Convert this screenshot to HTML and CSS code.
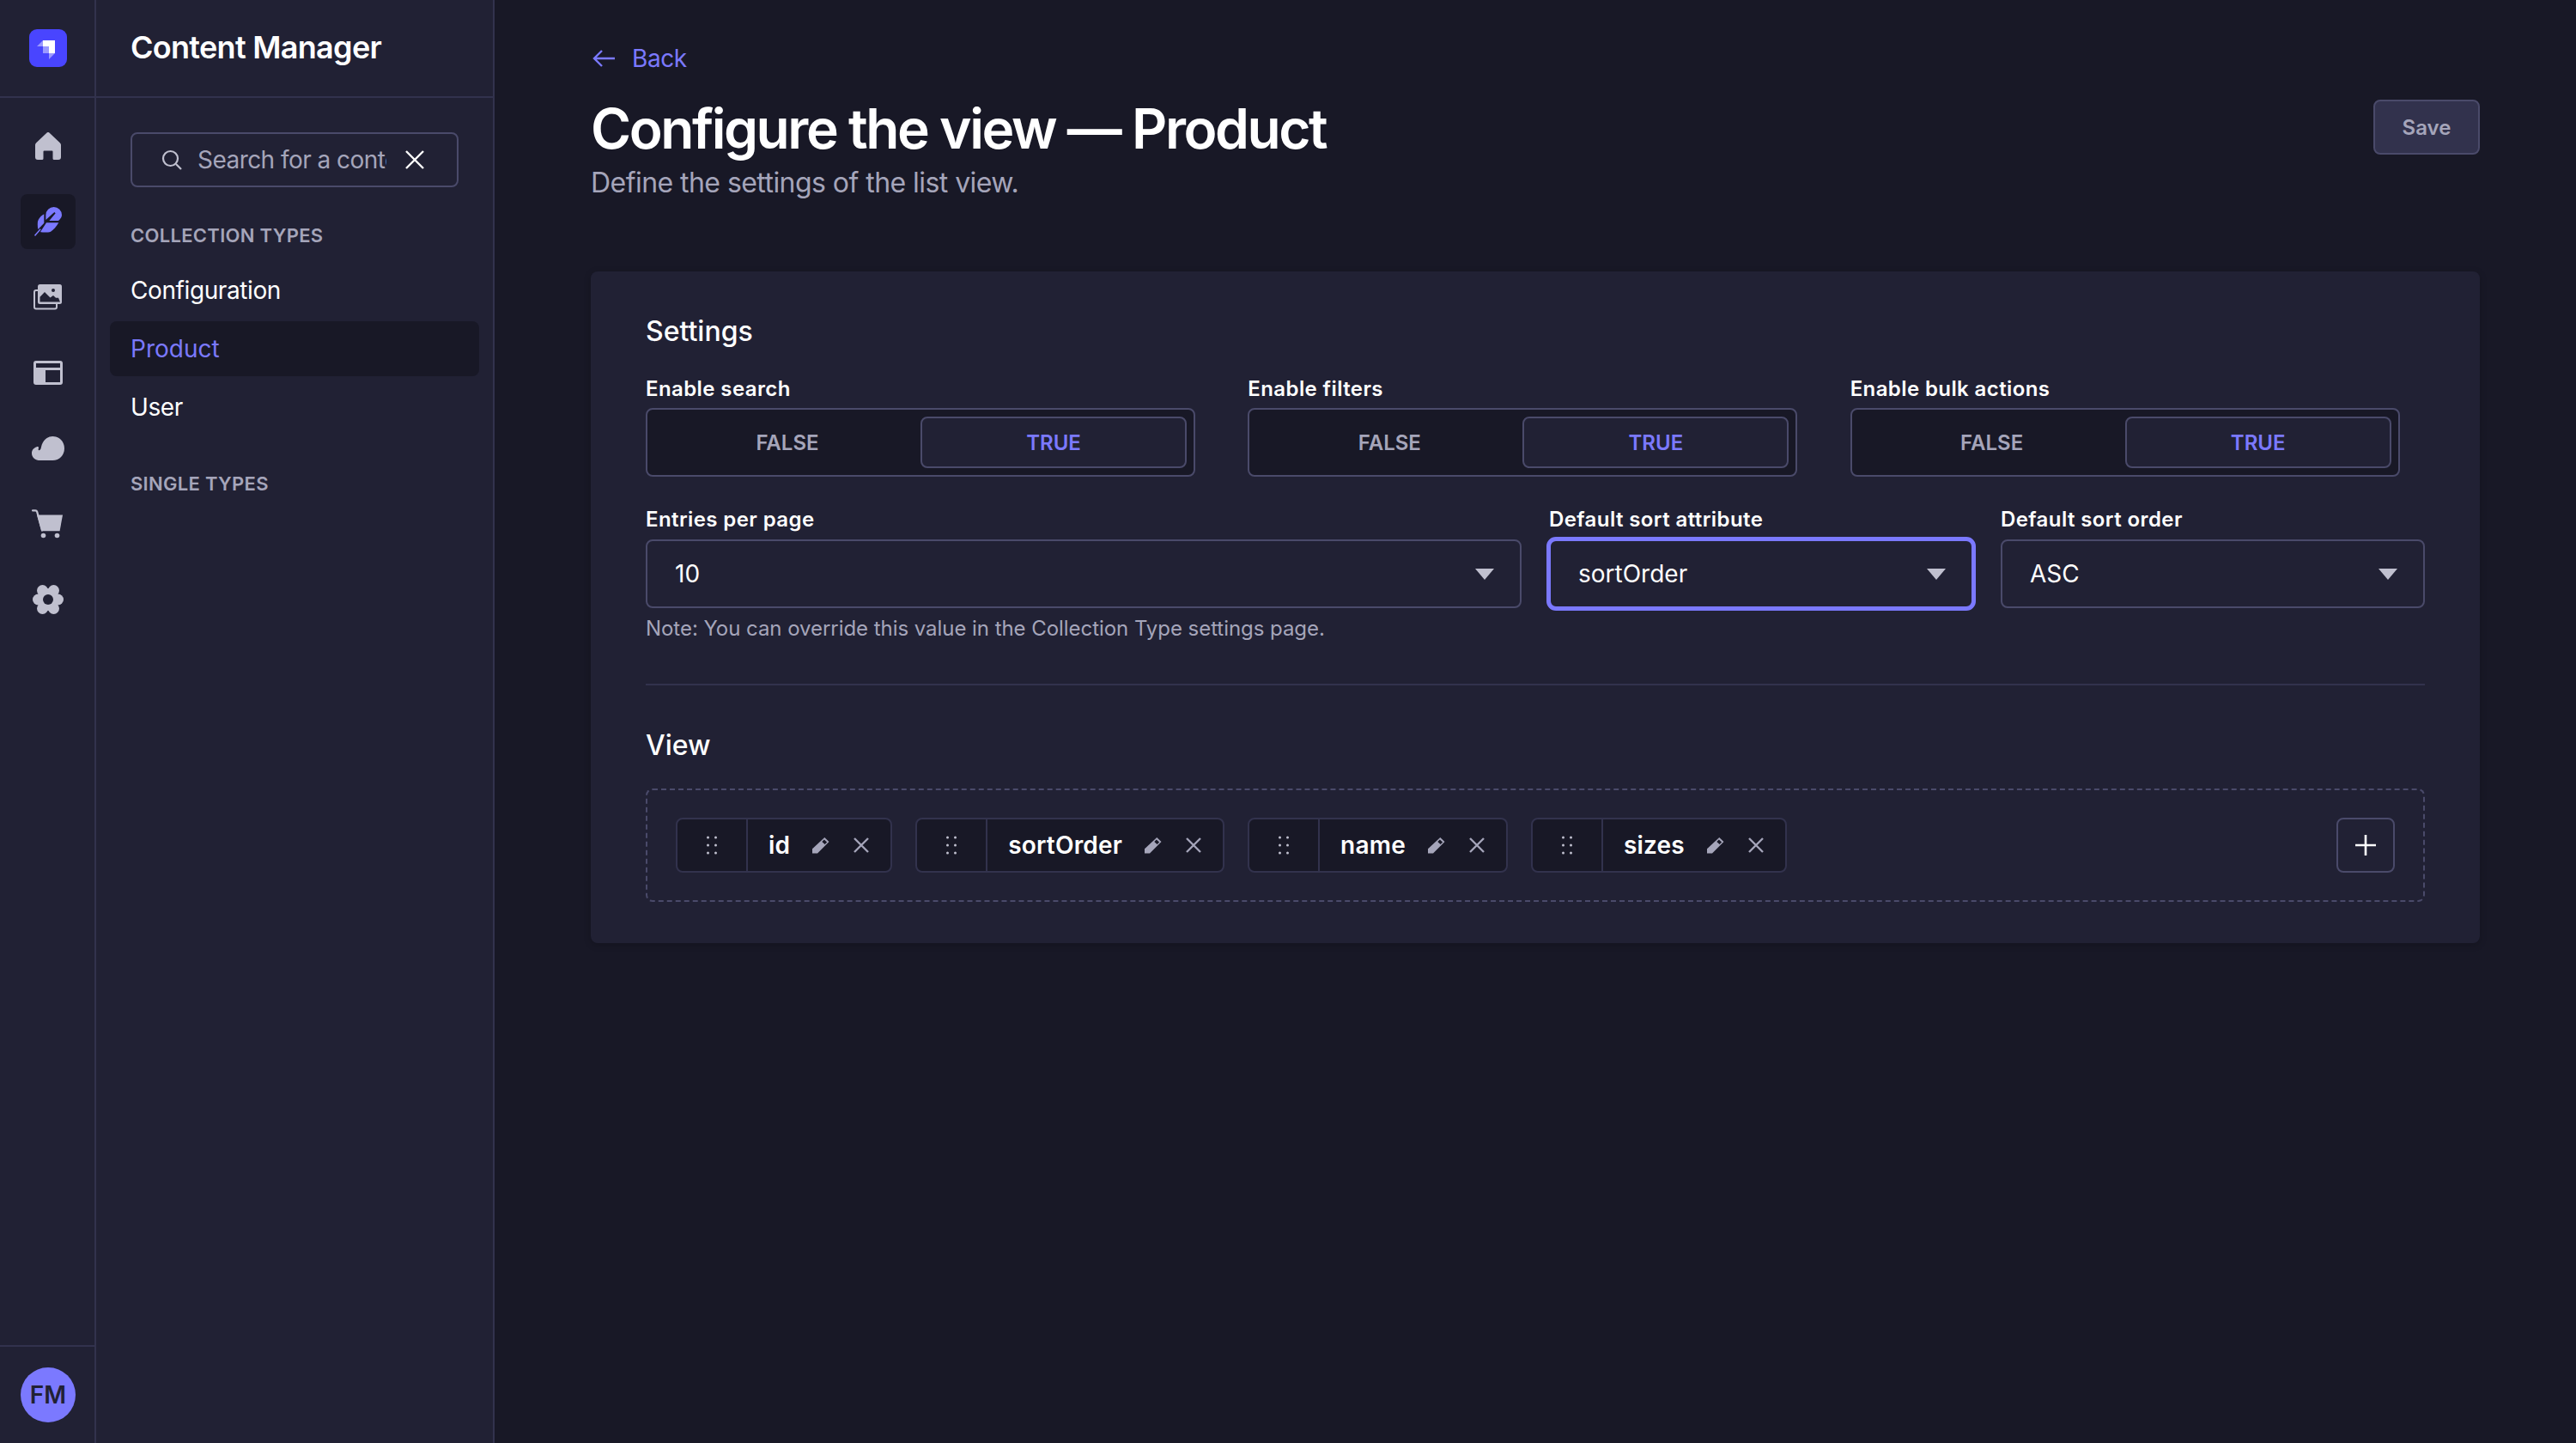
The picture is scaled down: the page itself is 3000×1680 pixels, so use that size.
FILE: index.html
```html
<!DOCTYPE html>
<html lang="en">
<head>
  <meta charset="UTF-8">
  <title>Configure the view - Product</title>
  <link rel="stylesheet" href="styles.css">
</head>
<body>
  <!-- Iconos de las filas de la vista -->
  <svg class="icon-defs">
    <symbol id="dots" viewBox="0 0 12 22">
      <circle cx="1.500" cy="2" r="1.500"/><circle cx="10.500" cy="2" r="1.500"/>
      <circle cx="1.500" cy="11" r="1.500"/><circle cx="10.500" cy="11" r="1.500"/>
      <circle cx="1.500" cy="20" r="1.500"/><circle cx="10.500" cy="20" r="1.500"/>
    </symbol>
    <symbol id="pencil" viewBox="0 0 20 19">
      <path d="M0 13.300L14.300 0 19.500 5 6 18.500H0z" fill="#a5a5ba"/>
      <path d="M11.300 5l2.500-2.500 3.300 3-2.500 2.500z" fill="#181826"/>
    </symbol>
    <symbol id="cross" viewBox="0 0 18 18">
      <path d="M1 1l16 16M17 1L1 17" fill="none" stroke="#a5a5ba" stroke-width="2.400"/>
    </symbol>
  </svg>

  <nav class="rail">
    <div class="rail-head">
      <svg class="logo" viewBox="0 0 44 44">
        <rect width="44" height="44" rx="9" fill="#4945ff"/>
        <path d="M16 13h14v15h-7v-8h-7z" fill="#fff"/>
        <path d="M9 20l7-7v7z" fill="#fff" opacity=".45"/>
        <path d="M16 20h7v8h-7z" fill="#fff" opacity=".45"/>
        <path d="M23 28h7l-7 7z" fill="#fff" opacity=".45"/>
      </svg>
    </div>
    <div class="rail-links">
      <a class="rail-link">
        <svg width="30" height="32" viewBox="0 0 30 32"><path d="M13.600.6a2 2 0 0 1 2.800 0l12.400 11.600a3.600 3.600 0 0 1 1.200 2.700V29a3 3 0 0 1-3 3h-5a1.500 1.500 0 0 1-1.500-1.500V22.500a1 1 0 0 0-1-1h-9a1 1 0 0 0-1 1v8A1.500 1.500 0 0 1 8 32H3a3 3 0 0 1-3-3V14.900a3.600 3.600 0 0 1 1.200-2.700z" fill="#c0c0cf"/></svg>
      </a>
      <a class="rail-link active">
        <svg width="34" height="36" viewBox="120 328 102 106" fill="#7b79ff">
          <path d="M163 375V358a27 27 0 0 1 56 0c0 7-5 15-12 20h-32l22-26-4-4z"/>
          <path d="M135 380c3-10 12-20 22-25v31l-21 22c-2-9-2-19-1-28z"/>
          <path d="M165 385h43c-7 12-18 25-28 31-8 3-22 3-34 2l-2-1z"/>
          <path d="M123 428l20-22 3 3-20 23z"/>
        </svg>
      </a>
      <a class="rail-link">
        <svg width="34" height="30" viewBox="0 0 34 30" fill="none">
          <rect x="1" y="7" width="26" height="21.500" rx="2" stroke="#c0c0cf" stroke-width="2"/>
          <rect x="5" y="0" width="28" height="23" rx="2.500" fill="#c0c0cf"/>
          <path d="M7.500 20.500v-5.800l5.500-5.700 6.500 6.500 3.500-2.500 3 2.800 3 0 2 4.700z" fill="#212134"/>
          <circle cx="23" cy="7" r="2" fill="#212134"/>
        </svg>
      </a>
      <a class="rail-link">
        <svg width="34" height="28" viewBox="0 0 34 28">
          <path d="M3 0h28a3 3 0 0 1 3 3v22a3 3 0 0 1-3 3H3a3 3 0 0 1-3-3V3a3 3 0 0 1 3-3z" fill="#c0c0cf"/>
          <path d="M3 3h28v5H3zM14 11h17v14H14z" fill="#212134"/>
        </svg>
      </a>
      <a class="rail-link">
        <svg width="38" height="28" viewBox="0 0 38 28"><path d="M10 28C4 28 0 24.500 0 19.700c0-3.600 2.200-6.300 5.800-7.500 1.200-.4 2.200 0 2.200 1 0 .6-.4 1.200-.4 2 0 1.200 1.400 1.500 2.300.4.600-.8.800-2 1.100-3.100C12.500 5 17.700 0 24.300 0 32 0 38 6 38 14c0 8-5.800 14-13.700 14z" fill="#c0c0cf"/></svg>
      </a>
      <a class="rail-link">
        <svg width="38" height="34" viewBox="0 0 38 34" fill="#c0c0cf">
          <path d="M1 1.300h3.200c1 0 1.700.6 2 1.600L12 24.500" fill="none" stroke="#c0c0cf" stroke-width="2.200" stroke-linecap="round"/>
          <path d="M6 6.500h30l-3.400 18.800H11.300z"/>
          <circle cx="13.500" cy="30.500" r="2.800"/>
          <circle cx="29.500" cy="30.500" r="2.800"/>
        </svg>
      </a>
      <a class="rail-link">
        <svg width="36" height="34" viewBox="0 0 36 34" fill="#c0c0cf">
          <circle cx="18" cy="17" r="13"/>
          <circle cx="11.500" cy="6.500" r="6.500"/>
          <circle cx="24.500" cy="6.500" r="6.500"/>
          <circle cx="6.500" cy="17" r="6.500"/>
          <circle cx="29.500" cy="17" r="6.500"/>
          <circle cx="11.500" cy="27.500" r="6.500"/>
          <circle cx="24.500" cy="27.500" r="6.500"/>
          <circle cx="18" cy="17" r="6" fill="#212134"/>
        </svg>
      </a>
    </div>
    <div class="rail-foot">
      <span class="avatar">FM</span>
    </div>
  </nav>

  <aside class="subnav">
    <h2 class="subnav-title">Content Manager</h2>
    <div class="subnav-body">
      <div class="search">
        <svg width="24" height="24" viewBox="0 0 24 24" fill="none" stroke="#c0c0cf" stroke-width="2.200"><circle cx="10.500" cy="10.500" r="8.500"/><path d="M17 17l6 6"/></svg>
        <span class="search-text">Search for a content type</span>
        <svg width="22" height="22" viewBox="0 0 22 22" fill="none" stroke="#fff" stroke-width="2.400"><path d="M1 1l20 20M21 1L1 21"/></svg>
      </div>
      <div class="section-label">Collection types</div>
      <a class="sub-link">Configuration</a>
      <a class="sub-link active">Product</a>
      <a class="sub-link">User</a>
      <div class="section-label second">Single types</div>
    </div>
  </aside>

  <main class="main">
    <a class="back">
      <svg width="26" height="20" viewBox="0 0 26 20" fill="none" stroke="#7b79ff" stroke-width="2.400"><path d="M26 10H2M11 1l-9 9 9 9"/></svg>
      Back
    </a>
    <div class="page-head">
      <div>
        <h1>Configure the view — Product</h1>
        <p class="subtitle">Define the settings of the list view.</p>
      </div>
      <button class="save">Save</button>
    </div>

    <section class="card">
      <h3>Settings</h3>
      <div class="form-grid">
        <div class="col-4">
          <label>Enable search</label>
          <div class="toggle"><span>False</span><span class="on">True</span></div>
        </div>
        <div class="col-4">
          <label>Enable filters</label>
          <div class="toggle"><span>False</span><span class="on">True</span></div>
        </div>
        <div class="col-4">
          <label>Enable bulk actions</label>
          <div class="toggle"><span>False</span><span class="on">True</span></div>
        </div>
        <div class="col-6">
          <label>Entries per page</label>
          <div class="select">10<i class="caret"></i></div>
          <p class="note">Note: You can override this value in the Collection Type settings page.</p>
        </div>
        <div class="col-3">
          <label>Default sort attribute</label>
          <div class="select focus">sortOrder<i class="caret"></i></div>
        </div>
        <div class="col-3">
          <label>Default sort order</label>
          <div class="select">ASC<i class="caret"></i></div>
        </div>
      </div>

      <hr class="divider">

      <h3>View</h3>
      <div class="view-box">
        <div class="chip">
          <span class="handle"><svg class="dots"><use href="#dots"/></svg></span>
          <span class="chip-name">id</span>
          <svg class="pencil"><use href="#pencil"/></svg>
          <svg class="cross"><use href="#cross"/></svg>
        </div>
        <div class="chip">
          <span class="handle"><svg class="dots"><use href="#dots"/></svg></span>
          <span class="chip-name">sortOrder</span>
          <svg class="pencil"><use href="#pencil"/></svg>
          <svg class="cross"><use href="#cross"/></svg>
        </div>
        <div class="chip">
          <span class="handle"><svg class="dots"><use href="#dots"/></svg></span>
          <span class="chip-name">name</span>
          <svg class="pencil"><use href="#pencil"/></svg>
          <svg class="cross"><use href="#cross"/></svg>
        </div>
        <div class="chip">
          <span class="handle"><svg class="dots"><use href="#dots"/></svg></span>
          <span class="chip-name">sizes</span>
          <svg class="pencil"><use href="#pencil"/></svg>
          <svg class="cross"><use href="#cross"/></svg>
        </div>
        <button class="add">
          <svg width="24" height="24" viewBox="0 0 24 24" fill="none" stroke="#fff" stroke-width="2.600"><path d="M12 0v24M0 12h24"/></svg>
        </button>
      </div>
    </section>
  </main>
</body>
</html>
```

FILE: styles.css
```css
* {
  box-sizing: border-box;
}

html, body {
  margin: 0;
  height: 100%;
}

body {
  display: flex;
  height: 1680px;
  overflow: hidden;
  background: #181826;
  color: #fff;
  font-family: Inter, "Noto Sans", sans-serif;
  font-size: 28px;
}

.icon-defs {
  display: none;
}

/* rail */
.rail {
  width: 112px;
  flex: none;
  display: flex;
  flex-direction: column;
  background: #212134;
  box-shadow: inset -2px 0 0 #32324d;
}

.rail-head {
  height: 114px;
  flex: none;
  display: flex;
  align-items: center;
  justify-content: center;
  border-bottom: 2px solid #32324d;
}

.logo {
  width: 44px;
  height: 44px;
}

.rail-links {
  flex: 1;
  display: flex;
  flex-direction: column;
  align-items: center;
  gap: 24px;
  padding-top: 24px;
}

.rail-link {
  width: 64px;
  height: 64px;
  display: flex;
  align-items: center;
  justify-content: center;
  border-radius: 8px;
}

.rail-link.active {
  background: #181826;
}

.rail-foot {
  height: 114px;
  flex: none;
  display: flex;
  align-items: center;
  justify-content: center;
  border-top: 2px solid #32324d;
}

.avatar {
  width: 64px;
  height: 64px;
  border-radius: 50%;
  display: flex;
  align-items: center;
  justify-content: center;
  background: #7b79ff;
  color: #212134;
  font-size: 28px;
  font-weight: 600;
}

/* sub nav */
.subnav {
  width: 464px;
  flex: none;
  background: #212134;
  border-right: 2px solid #32324d;
}

.subnav-title {
  height: 114px;
  margin: 0;
  padding: 0 40px 2px 40px;
  display: flex;
  align-items: center;
  border-bottom: 2px solid #32324d;
  font-size: 36px;
  font-weight: 600;
  letter-spacing: -0.7px;
}

.subnav-body {
  padding: 40px 16px 0 16px;
}

.search {
  margin: 0 24px;
  width: 382px;
  height: 64px;
  display: flex;
  align-items: center;
  padding: 0 38px 0 34px;
  border: 2px solid #4a4a6a;
  border-radius: 8px;
}

.search-text {
  flex: 1;
  min-width: 0;
  margin: 0 22px 0 18px;
  overflow: hidden;
  white-space: nowrap;
  letter-spacing: -0.55px;
  color: #a5a5ba;
}

.section-label {
  margin: 44px 24px 0 24px;
  height: 24px;
  line-height: 24px;
  font-size: 22px;
  font-weight: 600;
  letter-spacing: 0.3px;
  text-transform: uppercase;
  color: #a5a5ba;
}

.section-label.second {
  margin-top: 45px;
}

.sub-link {
  display: flex;
  align-items: center;
  height: 64px;
  margin-top: 4px;
  padding: 0 24px;
  border-radius: 8px;
  letter-spacing: -0.4px;
}

.section-label + .sub-link {
  margin-top: 20px;
}

.sub-link.active {
  background: #181826;
  color: #7b79ff;
  letter-spacing: 0;
}

/* main */
.main {
  flex: 1;
  min-width: 0;
  padding: 48px 112px 0 112px;
}

.back {
  display: flex;
  align-items: center;
  gap: 20px;
  height: 40px;
  padding-left: 2px;
  letter-spacing: -0.4px;
  color: #7b79ff;
}

.page-head {
  display: flex;
  align-items: flex-start;
  justify-content: space-between;
  margin-top: 24px;
}

h1 {
  margin: 0;
  font-size: 64px;
  line-height: 76px;
  font-weight: 600;
  letter-spacing: -2.45px;
}

.subtitle {
  margin: 5px 0 0 0;
  font-size: 32px;
  line-height: 40px;
  letter-spacing: -0.55px;
  color: #a5a5ba;
}

.save {
  margin-top: 4px;
  width: 124px;
  height: 64px;
  background: #32324d;
  border: 2px solid #4a4a6a;
  border-radius: 8px;
  color: #a5a5ba;
  font-family: inherit;
  font-size: 24px;
  font-weight: 600;
}

.card {
  margin-top: 83px;
  padding: 50px 64px 48px 64px;
  background: #212134;
  border-radius: 8px;
  box-shadow: 0 2px 8px rgba(3, 3, 5, 0.2);
}

h3 {
  margin: 0;
  font-size: 32px;
  line-height: 40px;
  font-weight: 500;
}

.form-grid {
  display: grid;
  grid-template-columns: repeat(12, 1fr);
  column-gap: 32px;
  row-gap: 38px;
  margin-top: 35px;
}

.col-3 { grid-column: span 3; }
.col-4 { grid-column: span 4; }
.col-6 { grid-column: span 6; }

label {
  display: block;
  height: 24px;
  line-height: 24px;
  margin-bottom: 10px;
  font-size: 24px;
  font-weight: 600;
  letter-spacing: 0.4px;
}

.col-3 label, .col-6 label {
  margin-bottom: 11px;
}

.toggle {
  display: flex;
  max-width: 640px;
  height: 80px;
  padding: 8px;
  background: #181826;
  border: 2px solid #4a4a6a;
  border-radius: 8px;
}

.toggle span {
  flex: 1;
  display: flex;
  align-items: center;
  justify-content: center;
  border: 2px solid transparent;
  border-radius: 8px;
  color: #a5a5ba;
  font-size: 24px;
  font-weight: 600;
  text-transform: uppercase;
}

.toggle span.on {
  background: #212134;
  border-color: #4a4a6a;
  color: #7b79ff;
}

.select {
  display: flex;
  align-items: center;
  justify-content: space-between;
  height: 80px;
  padding: 0 30px 0 32px;
  border: 2px solid #4a4a6a;
  border-radius: 8px;
}

.select.focus {
  border-color: #7b79ff;
  outline: 4px solid #7b79ff;
  outline-offset: -1px;
}

.caret {
  width: 0;
  height: 0;
  border-left: 11px solid transparent;
  border-right: 11px solid transparent;
  border-top: 13px solid #c0c0cf;
}

.note {
  margin: 10px 0 0 0;
  font-size: 24px;
  line-height: 28px;
  letter-spacing: -0.05px;
  color: #a5a5ba;
}

.divider {
  height: 2px;
  margin: 50px 0 50px 0;
  border: 0;
  background: #32324d;
}

.view-box {
  display: flex;
  align-items: center;
  gap: 27px;
  height: 132px;
  margin-top: 30px;
  padding: 0 33px;
  border: 2px dashed #4a4a6a;
  border-radius: 8px;
}

.chip {
  display: flex;
  align-items: center;
  height: 64px;
  background: #181826;
  border: 2px solid #32324d;
  border-radius: 8px;
}

.handle {
  width: 82px;
  height: 100%;
  flex: none;
  display: flex;
  align-items: center;
  justify-content: center;
  border-right: 2px solid #32324d;
}

.dots {
  width: 12px;
  height: 22px;
  fill: #c0c0cf;
}

.chip-name {
  margin-left: 24px;
  font-weight: 600;
  letter-spacing: 0.2px;
}

.pencil {
  width: 20px;
  height: 19px;
  margin-left: 26px;
}

.cross {
  width: 18px;
  height: 18px;
  margin-left: 28px;
  margin-right: 25px;
}

.add {
  width: 68px;
  height: 64px;
  margin-left: auto;
  display: flex;
  align-items: center;
  justify-content: center;
  background: none;
  border: 2px solid #4a4a6a;
  border-radius: 8px;
}
```
